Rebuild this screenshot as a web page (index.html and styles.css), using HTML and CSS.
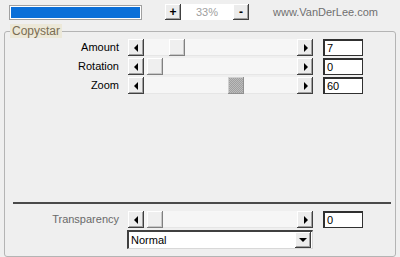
FILE: index.html
```html
<!DOCTYPE html>
<html lang="en">

<head>
    <meta charset="UTF-8">
    <title>Copystar</title>
    <link rel="stylesheet" href="styles.css">
</head>

<body>
    <div class="top">
        <div class="progress"><div class="fill"></div></div>
        <div class="zoom">
            <span class="btn">+</span>
            <span class="pct">33%</span>
            <span class="btn">-</span>
        </div>
        <span class="site">www.VanDerLee.com</span>
    </div>

    <fieldset class="panel">
        <legend>Copystar</legend>
        <div class="rows">
            <div class="row">
                <label>Amount</label>
                <div class="slider">
                    <span class="arrow left"></span>
                    <div class="track"><span class="thumb" style="margin-left: 25px;"></span></div>
                    <span class="arrow right"></span>
                </div>
                <input type="text" class="val" value="7">
            </div>
            <div class="row">
                <label>Rotation</label>
                <div class="slider">
                    <span class="arrow left"></span>
                    <div class="track"><span class="thumb" style="margin-left: 3px;"></span></div>
                    <span class="arrow right"></span>
                </div>
                <input type="text" class="val" value="0">
            </div>
            <div class="row">
                <label>Zoom</label>
                <div class="slider">
                    <span class="arrow left"></span>
                    <div class="track"><span class="thumb focus" style="margin-left: 84px;"></span></div>
                    <span class="arrow right"></span>
                </div>
                <input type="text" class="val" value="60">
            </div>
        </div>

        <div class="sep"></div>

        <div class="rows bottom">
            <div class="row">
                <label class="dim">Transparency</label>
                <div class="slider">
                    <span class="arrow left"></span>
                    <div class="track"><span class="thumb" style="margin-left: 3px;"></span></div>
                    <span class="arrow right"></span>
                </div>
                <input type="text" class="val" value="0">
            </div>
            <div class="row">
                <span></span>
                <div class="combo">
                    <span class="combo-text">Normal</span>
                    <span class="arrow down"></span>
                </div>
            </div>
        </div>
    </fieldset>
</body>

</html>
```

FILE: styles.css
```css
* {
    box-sizing: border-box;
}

body {
    margin: 0;
    width: 400px;
    height: 257px;
    background-color: #efefef;
    font: normal 11px/13px 'Liberation Sans', Arial, sans-serif;
    color: #000;
    overflow: hidden;
}

.top {
    display: flex;
    align-items: center;
    height: 24px;
    padding-left: 9px;
}

.progress {
    width: 133px;
    height: 15px;
    border: 1px solid #a0a0a0;
    background-color: #fff;
    padding: 1px;
}

.progress .fill {
    width: 100%;
    height: 100%;
    background-color: #0a6fd8;
}

.zoom {
    display: flex;
    margin-left: 23px;
    height: 16px;
}

.btn {
    width: 16px;
    height: 16px;
    display: flex;
    align-items: center;
    justify-content: center;
    font-weight: bold;
    font-size: 12px;
    background-color: #ececec;
    box-shadow: inset -1px -1px #404040, inset 1px 1px #fff, inset -2px -2px #a0a0a0;
}

.pct {
    width: 52px;
    background-color: #fff;
    color: #a0a0a0;
    text-align: center;
    line-height: 16px;
}

.site {
    margin-left: 24px;
    color: #707070;
    font-size: 11px;
}

.panel {
    margin: 0 4px;
    padding: 1px 0 0 0;
    height: 233px;
    border: 1px solid #b4b4b4;
    border-radius: 3px;
}

.panel legend {
    margin-left: 5px;
    padding: 0 2px;
    background-color: #ece8d8;
    color: #7a6d52;
    font-size: 12px;
    line-height: 14px;
}

.rows {
    display: flex;
    flex-direction: column;
    gap: 2px;
}

.row {
    display: grid;
    grid-template-columns: 114px 185px 41px;
    column-gap: 9px;
    align-items: center;
}

.row .val {
    margin-left: 1px;
}

label {
    text-align: right;
}

label.dim {
    color: #6a6a6a;
}

.slider {
    display: flex;
    height: 17px;
}

.track {
    flex: 1;
    background-color: #f6f6f6;
    border-bottom: 1px solid #e6e6e6;
    display: flex;
}

.thumb {
    width: 16px;
    height: 17px;
    background-color: #efefef;
    box-shadow: inset -1px -1px #808080, inset 1px 1px #fff, inset -2px -2px #c8c8c8;
}

/* dithered thumb of the focused slider */
.thumb.focus {
    background-color: #a8a8a8;
    background-image: repeating-conic-gradient(#bcbcbc 0 25%, #a0a0a0 0 50%);
    background-size: 2px 2px;
    box-shadow: inset -1px -1px #909090, inset 1px 1px #d0d0d0;
}

.arrow {
    width: 16px;
    height: 17px;
    background-color: #ececec;
    box-shadow: inset -1px -1px #404040, inset 1px 1px #fff, inset -2px -2px #a0a0a0;
    display: flex;
    align-items: center;
    justify-content: center;
}

.arrow::before {
    content: '';
    width: 0;
    height: 0;
}

.arrow.left::before {
    border-top: 4px solid transparent;
    border-bottom: 4px solid transparent;
    border-right: 4px solid #000;
    margin-right: 1px;
}

.arrow.right::before {
    border-top: 4px solid transparent;
    border-bottom: 4px solid transparent;
    border-left: 4px solid #000;
    margin-left: 1px;
}

.arrow.down {
    height: 16px;
}

.arrow.down::before {
    border-left: 4px solid transparent;
    border-right: 4px solid transparent;
    border-top: 4px solid #000;
}

.val {
    width: 40px;
    height: 17px;
    border: 1px solid #303030;
    border-top-width: 2px;
    border-left-width: 2px;
    background-color: #fff;
    padding: 0 0 0 2px;
    font: normal 11px 'Liberation Sans', Arial, sans-serif;
    outline: none;
}

.sep {
    margin: 108px 4px 0 8px;
    height: 2px;
    background-color: #4a4a4a;
}

.rows.bottom {
    margin-top: 7px;
}

.combo {
    grid-column: 2;
    margin-left: -1px;
    height: 19px;
    display: flex;
    align-items: center;
    background-color: #fff;
    border-top: 2px solid #404040;
    border-left: 2px solid #404040;
    border-bottom: 1px solid #d8d8d8;
    border-right: 1px solid #d8d8d8;
    padding-right: 1px;
}

.combo-text {
    flex: 1;
    padding-left: 2px;
}
```
